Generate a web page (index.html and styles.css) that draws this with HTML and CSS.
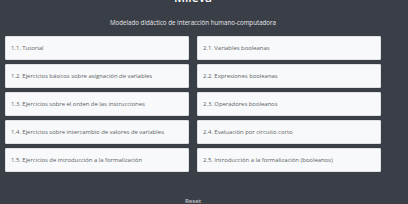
FILE: index.html
```html
<!DOCTYPE html>
<html lang="es">
<head>
<meta charset="utf-8">
<title>Mileva</title>
<link rel="stylesheet" href="styles.css">
</head>
<body>
<div class="page">
  <header class="header">
    <h1 class="title">Mileva</h1>
    <p class="subtitle">Modelado didáctico de interacción humano-computadora</p>
  </header>
  <main class="grid">
    <a class="card" href="#">1.1. Tutorial</a>
    <a class="card" href="#">2.1. Variables booleanas</a>
    <a class="card" href="#">1.2. Ejercicios básicos sobre asignación de variables</a>
    <a class="card" href="#">2.2. Expresiones booleanas</a>
    <a class="card" href="#">1.3. Ejercicios sobre el orden de las instrucciones</a>
    <a class="card" href="#">2.3. Operadores booleanos</a>
    <a class="card" href="#">1.4. Ejercicios sobre intercambio de valores de variables</a>
    <a class="card" href="#">2.4. Evaluación por circuito corto</a>
    <a class="card" href="#">1.5. Ejercicios de introducción a la formalización</a>
    <a class="card" href="#">2.5. Introducción a la formalización (booleanos)</a>
  </main>
  <footer class="footer">
    <a class="reset" href="#">Reset</a>
  </footer>
</div>
</body>
</html>
```
FILE: styles.css
```css
html, body {
  margin: 0;
  padding: 0;
  background: #3a3e46;
  height: 100%;
  overflow: hidden;
}
body {
  font-family: "Open Sans", "DejaVu Sans", sans-serif;
}
.page {
  width: 386px;
  display: flex;
  flex-direction: column;
  align-items: center;
}
.header {
  display: flex;
  flex-direction: column;
  align-items: center;
}
.title {
  margin: -9px 0 0;
  font-size: 12px;
  line-height: 14px;
  font-weight: 600;
  color: #ffffff;
}
.subtitle {
  margin: 14px 0 0;
  font-size: 6.2px;
  line-height: 8px;
  color: #e6e7e9;
}
.grid {
  margin-top: 9px;
  display: grid;
  grid-template-columns: 184px 184px;
  column-gap: 8px;
  row-gap: 4px;
}
.card {
  height: 24px;
  box-sizing: border-box;
  display: flex;
  align-items: center;
  padding: 0 5px;
  background: #f8f9fa;
  border: 0.5px solid #dfe1e4;
  border-radius: 1px;
  color: #5a5e64;
  font-size: 5.9px;
  text-decoration: none;
}
.footer {
  margin-top: 22px;
  line-height: 7px;
}
.reset {
  font-size: 6px;
  font-weight: 600;
  color: #c4c7cc;
  text-decoration: underline;
}
```
